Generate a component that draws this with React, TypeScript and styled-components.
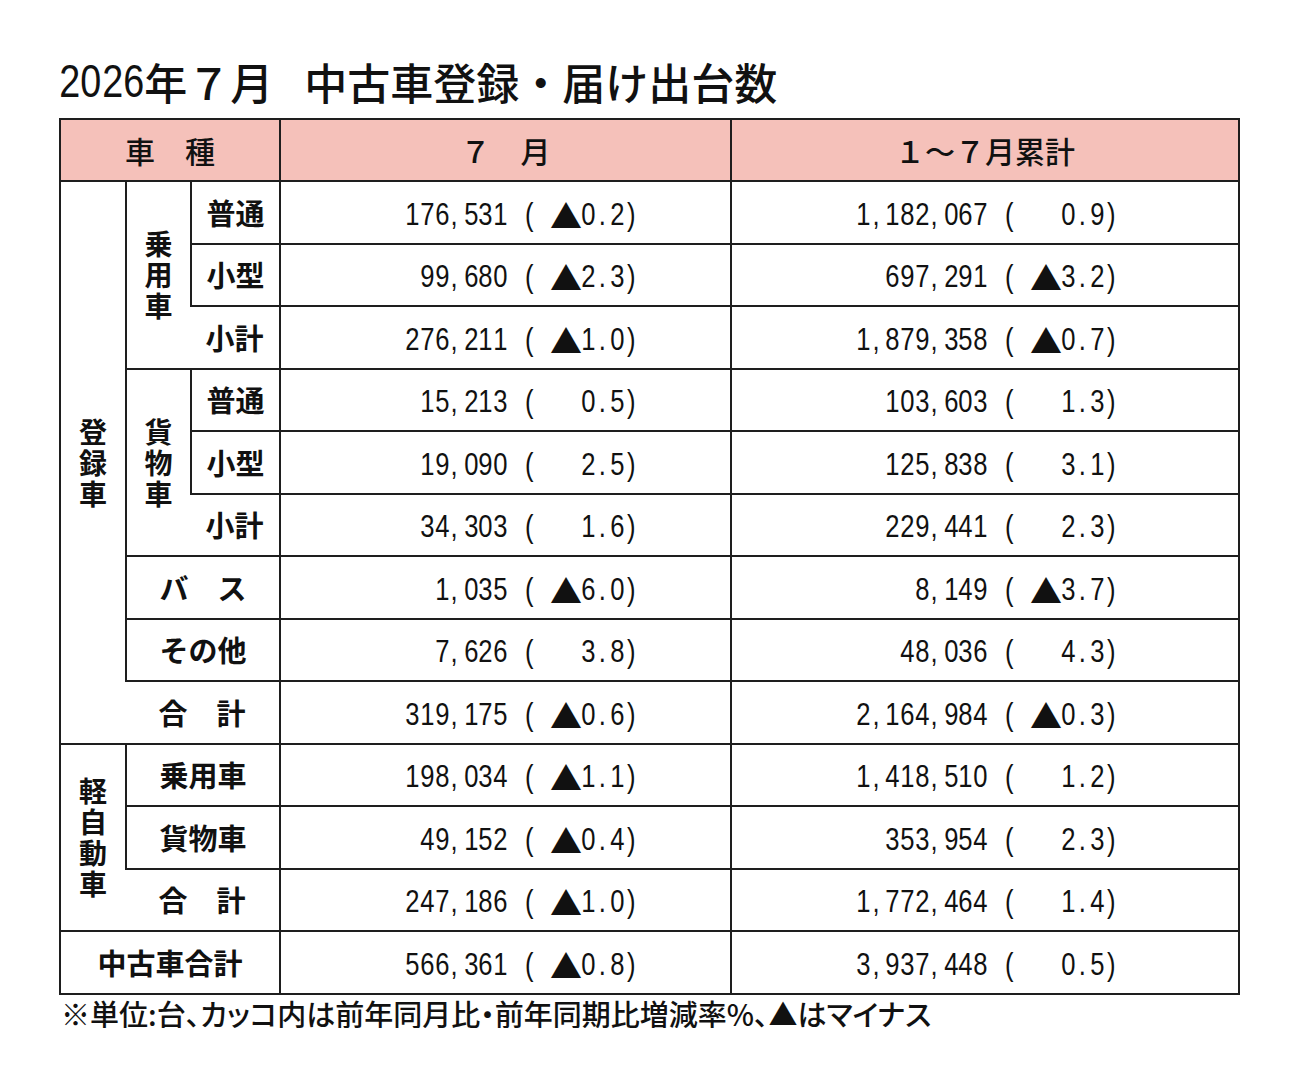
import { createGlobalStyle, styled } from 'styled-components';

const LINE = '#1e1e1e';
const PINK = '#f5c1ba';
const DIGIT = '"Liberation Sans", Arial, sans-serif';
const GOTHIC = '"Noto Sans CJK JP", "Noto Sans", sans-serif';

const GlobalStyle = createGlobalStyle`
  body {
    margin: 0;
    background: #fff;
    color: #111;
    font-family: ${GOTHIC};
  }
`;

type Row = { m: string; mp: string; y: string; yp: string };

const rows: Row[] = [
  { m: '176,531', mp: '▲0.2', y: '1,182,067', yp: '0.9' },
  { m: '99,680', mp: '▲2.3', y: '697,291', yp: '▲3.2' },
  { m: '276,211', mp: '▲1.0', y: '1,879,358', yp: '▲0.7' },
  { m: '15,213', mp: '0.5', y: '103,603', yp: '1.3' },
  { m: '19,090', mp: '2.5', y: '125,838', yp: '3.1' },
  { m: '34,303', mp: '1.6', y: '229,441', yp: '2.3' },
  { m: '1,035', mp: '▲6.0', y: '8,149', yp: '▲3.7' },
  { m: '7,626', mp: '3.8', y: '48,036', yp: '4.3' },
  { m: '319,175', mp: '▲0.6', y: '2,164,984', yp: '▲0.3' },
  { m: '198,034', mp: '▲1.1', y: '1,418,510', yp: '1.2' },
  { m: '49,152', mp: '▲0.4', y: '353,954', yp: '2.3' },
  { m: '247,186', mp: '▲1.0', y: '1,772,464', yp: '1.4' },
  { m: '566,361', mp: '▲0.8', y: '3,937,448', yp: '0.5' },
];

// half-width characters sit in fixed cells, like a condensed gothic face
const Mono = ({ text }: { text: string }) => (
  <>
    {[...text].map((ch, i) =>
      ch === '▲' ? (
        <Tri key={i}>{ch}</Tri>
      ) : (
        <Ch key={i} $punct={ch === ','}>{ch}</Ch>
      )
    )}
  </>
);

const Figure = ({ num, pct, pad }: { num: string; pct: string; pad: number }) => (
  <Value $pad={pad}>
    <Mono text={num + ' ('} />
    <Pct>
      <Mono text={pct} />
    </Pct>
    <Mono text=")" />
  </Value>
);

const App = () => {
  return (
    <Page>
      <GlobalStyle />
      <Title>
        {[...'2026'].map((d, i) => (
          <TitleDigit key={i}>{d}</TitleDigit>
        ))}
        年７月<TitleGap />中古車登録・届け出台数
      </Title>

      <Grid>
        <Cell $col="1 / 4" $row="1" $head>車　種</Cell>
        <Cell $col="4" $row="1" $head>７　月</Cell>
        <Cell $col="5" $row="1" $head>１～７月累計</Cell>

        <Cell $col="1" $row="2 / 11"><VLabel>登録車</VLabel></Cell>

        <Cell $col="2" $row="2 / 5"><VLabel>乗用車</VLabel></Cell>
        <Cell $col="3" $row="2"><Label>普通</Label></Cell>
        <Cell $col="3" $row="3"><Label>小型</Label></Cell>
        <Cell $col="3" $row="4" $noLeft><Label>小計</Label></Cell>

        <Cell $col="2" $row="5 / 8"><VLabel>貨物車</VLabel></Cell>
        <Cell $col="3" $row="5"><Label>普通</Label></Cell>
        <Cell $col="3" $row="6"><Label>小型</Label></Cell>
        <Cell $col="3" $row="7" $noLeft><Label>小計</Label></Cell>

        <Cell $col="2 / 4" $row="8"><Label>バ　ス</Label></Cell>
        <Cell $col="2 / 4" $row="9"><Label>その他</Label></Cell>
        <Cell $col="2 / 4" $row="10" $noLeft><Label>合　計</Label></Cell>

        <Cell $col="1" $row="11 / 14"><VLabel>軽自動車</VLabel></Cell>
        <Cell $col="2 / 4" $row="11"><Label>乗用車</Label></Cell>
        <Cell $col="2 / 4" $row="12"><Label>貨物車</Label></Cell>
        <Cell $col="2 / 4" $row="13" $noLeft><Label>合　計</Label></Cell>

        <Cell $col="1 / 4" $row="14"><Label>中古車合計</Label></Cell>

        {rows.map((r, i) => (
          <Cell key={`m${i}`} $col="4" $row={String(i + 2)} $end>
            <Figure num={r.m} pct={r.mp} pad={91} />
          </Cell>
        ))}
        {rows.map((r, i) => (
          <Cell key={`y${i}`} $col="5" $row={String(i + 2)} $end>
            <Figure num={r.y} pct={r.yp} pad={119} />
          </Cell>
        ))}
      </Grid>

      <Note>※単位:台、カッコ内は前年同月比・前年同期比増減率%、▲はマイナス</Note>
    </Page>
  );
};

export default App;

const Page = styled.div`
  display: flex;
  flex-direction: column;
  align-items: flex-start;
  padding: 58px 0 0 59px;
`;

const Title = styled.h1`
  display: flex;
  align-items: center;
  height: 46px;
  margin: 0 0 14px 0;
  font-family: ${GOTHIC};
  font-size: 43px;
  font-weight: 500;
  line-height: 46px;
  white-space: nowrap;
`;

const TitleDigit = styled.span`
  display: inline-flex;
  justify-content: center;
  width: 21.3px;
  font-family: ${DIGIT};
  font-size: 46px;
  font-weight: 400;
  transform: scaleX(0.82);
`;

const TitleGap = styled.span`
  display: inline-block;
  width: 31px;
`;

const Grid = styled.div`
  display: grid;
  grid-template-columns: 66px 65px 89px 451px 508px;
  grid-template-rows: 62px repeat(13, 62.5px);
  border-right: 2px solid ${LINE};
  border-bottom: 2px solid ${LINE};
`;

const Cell = styled.div<{ $col: string; $row: string; $head?: boolean; $noLeft?: boolean; $end?: boolean }>`
  grid-column: ${(p) => p.$col};
  grid-row: ${(p) => p.$row};
  box-sizing: border-box;
  border-top: 2px solid ${LINE};
  border-left: ${(p) => (p.$noLeft ? 'none' : `2px solid ${LINE}`)};
  background: ${(p) => (p.$head ? PINK : '#fff')};
  display: flex;
  align-items: center;
  justify-content: ${(p) => (p.$end ? 'flex-end' : 'center')};
  font-size: 30px;
  font-weight: 500;
  white-space: nowrap;
`;

const Label = styled.span`
  font-size: 29px;
  font-weight: 700;
  line-height: 1;
`;

const VLabel = styled.span`
  width: 1em;
  font-size: 28px;
  font-weight: 700;
  line-height: 31px;
  text-align: center;
  word-break: break-all;
  white-space: normal;
`;

const Value = styled.span<{ $pad: number }>`
  display: flex;
  align-items: center;
  padding-right: ${(p) => p.$pad}px;
  padding-top: 3px;
`;

const Pct = styled.span`
  display: flex;
  justify-content: flex-end;
  width: 87.6px;
`;

const Ch = styled.span<{ $punct?: boolean }>`
  display: inline-flex;
  justify-content: ${(p) => (p.$punct ? 'flex-start' : 'center')};
  width: 14.6px;
  font-family: ${DIGIT};
  font-size: 32px;
  font-weight: 400;
  line-height: 32px;
  transform: scaleX(0.8);
`;

const Tri = styled.span`
  display: inline-flex;
  justify-content: center;
  width: 29.2px;
  font-family: ${GOTHIC};
  font-size: 32px;
  line-height: 32px;
`;

const Note = styled.p`
  margin: 4px 0 0 2px;
  font-size: 29px;
  font-weight: 500;
  line-height: 29px;
  font-feature-settings: 'palt';
  white-space: nowrap;
`;
